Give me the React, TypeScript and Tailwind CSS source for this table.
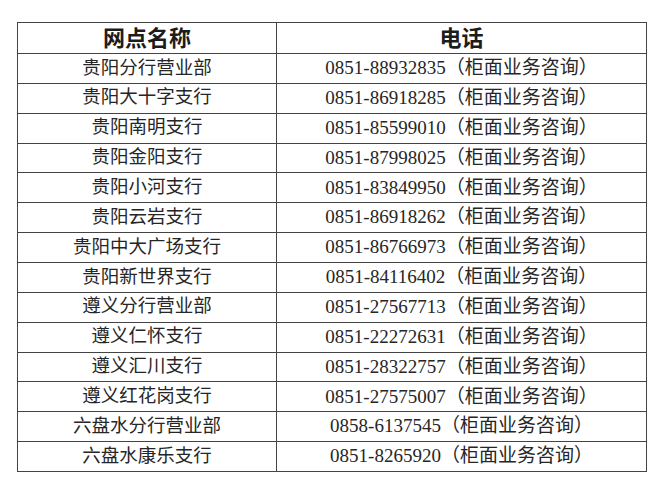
import React from "react";

interface Branch {
  name: string;
  phone: string;
}

const branches: Branch[] = [
  { name: "贵阳分行营业部", phone: "0851-88932835" },
  { name: "贵阳大十字支行", phone: "0851-86918285" },
  { name: "贵阳南明支行", phone: "0851-85599010" },
  { name: "贵阳金阳支行", phone: "0851-87998025" },
  { name: "贵阳小河支行", phone: "0851-83849950" },
  { name: "贵阳云岩支行", phone: "0851-86918262" },
  { name: "贵阳中大广场支行", phone: "0851-86766973" },
  { name: "贵阳新世界支行", phone: "0851-84116402" },
  { name: "遵义分行营业部", phone: "0851-27567713" },
  { name: "遵义仁怀支行", phone: "0851-22272631" },
  { name: "遵义汇川支行", phone: "0851-28322757" },
  { name: "遵义红花岗支行", phone: "0851-27575007" },
  { name: "六盘水分行营业部", phone: "0858-6137545" },
  { name: "六盘水康乐支行", phone: "0851-8265920" },
];

const font = "font-['Liberation_Serif','Noto_Sans_CJK_SC',serif]";

const App: React.FC = () => {
  return (
    <div className={`w-[667px] h-[500px] bg-white pt-[22px] pl-[17px] text-[#262626] ${font}`}>
      <div className="w-[630px] border-t border-l border-[#444]">
        <div className="flex h-[31px] border-b border-[#444]">
          <div className="w-[259px] border-r border-[#444] flex items-center justify-center text-[22px] font-bold text-[#1c1c1c]">
            网点名称
          </div>
          <div className="flex-1 border-r border-[#444] flex items-center justify-center text-[22px] font-bold text-[#1c1c1c]">
            电话
          </div>
        </div>
        {branches.map((b) => (
          <div key={b.name} className="flex h-[29.86px] border-b border-[#444]">
            <div className="w-[259px] border-r border-[#444] flex items-center justify-center text-[18.5px]">
              {b.name}
            </div>
            <div className="flex-1 border-r border-[#444] flex items-center justify-center text-[19px]">
              {b.phone}（柜面业务咨询）
            </div>
          </div>
        ))}
      </div>
    </div>
  );
};

export default App;
